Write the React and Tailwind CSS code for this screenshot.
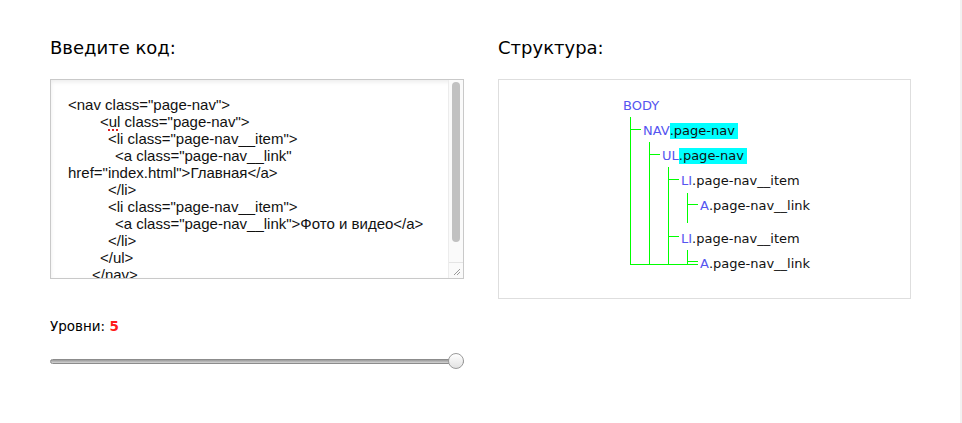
import React from 'react';

const CODE_LINES = [
  { pad: 'pl-0', text: '<nav class="page-nav">' },
  { pad: 'pl-[32px]', text: 'ul' },
  { pad: 'pl-[40px]', text: '<li class="page-nav__item">' },
  { pad: 'pl-[47px]', text: '<a class="page-nav__link"' },
  { pad: 'pl-0', text: 'href="index.html">Главная</a>' },
  { pad: 'pl-[40px]', text: '</li>' },
  { pad: 'pl-[40px]', text: '<li class="page-nav__item">' },
  { pad: 'pl-[47px]', text: '<a class="page-nav__link">Фото и видео</a>' },
  { pad: 'pl-[40px]', text: '</li>' },
  { pad: 'pl-[32px]', text: '</ul>' },
  { pad: 'pl-[24px]', text: '</nav>' },
];

const TREE = [
  { pad: 'pl-[124px]', tag: 'BODY' },
  { pad: 'pl-[144px]', tag: 'NAV', cls: 'page-nav', hl: true },
  { pad: 'pl-[163px]', tag: 'UL', cls: 'page-nav', hl: true },
  { pad: 'pl-[182px]', tag: 'LI', cls: 'page-nav__item' },
  { pad: 'pl-[201px]', tag: 'A', cls: 'page-nav__link', gapAfter: true },
  { pad: 'pl-[182px]', tag: 'LI', cls: 'page-nav__item' },
  { pad: 'pl-[201px]', tag: 'A', cls: 'page-nav__link' },
];

function CodeBox() {
  return (
    <div className="relative h-[200px] border border-[#c9c9c9] bg-white shadow-[inset_0_2px_4px_rgba(0,0,0,0.08)] flex overflow-hidden">
      <div className="flex-1 pt-[16px] pl-[17px] text-[15px] leading-[17px] text-[#111] font-['Liberation_Sans',Arial,sans-serif] whitespace-pre">
        {CODE_LINES.map((l, i) => (
          <div key={i} className={l.pad}>
            {l.text === 'ul' ? (
              <>
                {'<'}
                <span className="underline decoration-dotted decoration-[#e02020] decoration-2 underline-offset-2">ul</span>
                {' class="page-nav">'}
              </>
            ) : (
              l.text
            )}
          </div>
        ))}
      </div>
      {/* scrollbar */}
      <div className="w-[15px] flex flex-col border-l border-[#ececec] bg-[#fafafa]">
        <div className="flex-1 px-[3px] pt-[2px]">
          <div className="h-[160px] rounded-full bg-[#c1c1c1]" />
        </div>
        <div className="h-[16px] border-t border-[#e4e4e4] flex items-end justify-end p-[2px]">
          <svg width="9" height="9" viewBox="0 0 9 9">
            <path d="M8 2 L2 8 M8 5 L5 8" stroke="#9a9a9a" strokeWidth="1" />
          </svg>
        </div>
      </div>
    </div>
  );
}

function Slider() {
  return (
    <div className="relative h-[18px] flex items-center">
      <div className="w-full h-[5px] rounded-full border border-[#8c8c8c] bg-gradient-to-b from-[#9a9a9a] to-[#d4d4d4]" />
      <div className="absolute right-0 top-[1px] w-[16px] h-[16px] rounded-full border border-[#9b9b9b] bg-gradient-to-b from-white to-[#e2e2e2]" />
    </div>
  );
}

function Tree() {
  return (
    <div className="relative h-[220px] border border-[#dedede] bg-white pt-[13px] font-['DejaVu_Sans',Verdana,sans-serif] text-[13px]">
      {TREE.map((r, i) => (
        <div key={i} className={`h-[25px] flex items-center ${r.pad} ${r.gapAfter ? 'mb-[8px]' : ''}`}>
          <span className="text-[#5555f0]">{r.tag}</span>
          {r.cls &&
            (r.hl ? (
              <span className="bg-[#00ffff] text-[#111] leading-[16px] pr-[3px]">.{r.cls}</span>
            ) : (
              <span className="text-[#111]">.{r.cls}</span>
            ))}
        </div>
      ))}
      <svg className="absolute inset-0 pointer-events-none" width="411" height="218">
        <g stroke="#00ff00" strokeWidth="1" fill="none">
          <path d="M131.5 37 V185" />
          <path d="M131 49.5 H142" />
          <path d="M150.5 62 V185" />
          <path d="M150 74.5 H161" />
          <path d="M169.5 87 V185" />
          <path d="M169 99.5 H180" />
          <path d="M188.5 113 V143" />
          <path d="M188 124.5 H199" />
          <path d="M169 156.5 H180" />
          <path d="M188.5 170 V184" />
          <path d="M188 181.5 H199" />
          <path d="M131 184.5 H199" />
        </g>
      </svg>
    </div>
  );
}

export default function App() {
  return (
    <div className="w-[962px] h-[423px] flex bg-white font-['DejaVu_Sans',Verdana,sans-serif] text-black">
      <div className="flex-1 flex gap-[34px] pl-[50px] pt-[36px]">
        <div className="w-[414px] flex flex-col">
          <h2 className="text-[18px] leading-[24px] mb-[19px]">Введите код:</h2>
          <CodeBox />
          <p className="mt-[39px] text-[13.5px] leading-[17px]">
            Уровни: <span className="font-bold text-[#ff1a1a]">5</span>
          </p>
          <div className="mt-[17px]">
            <Slider />
          </div>
        </div>
        <div className="w-[413px] flex flex-col">
          <h2 className="text-[18px] leading-[24px] mb-[19px]">Структура:</h2>
          <Tree />
        </div>
      </div>
      <div className="w-[2px] bg-[#f2f2f2]" />
    </div>
  );
}
